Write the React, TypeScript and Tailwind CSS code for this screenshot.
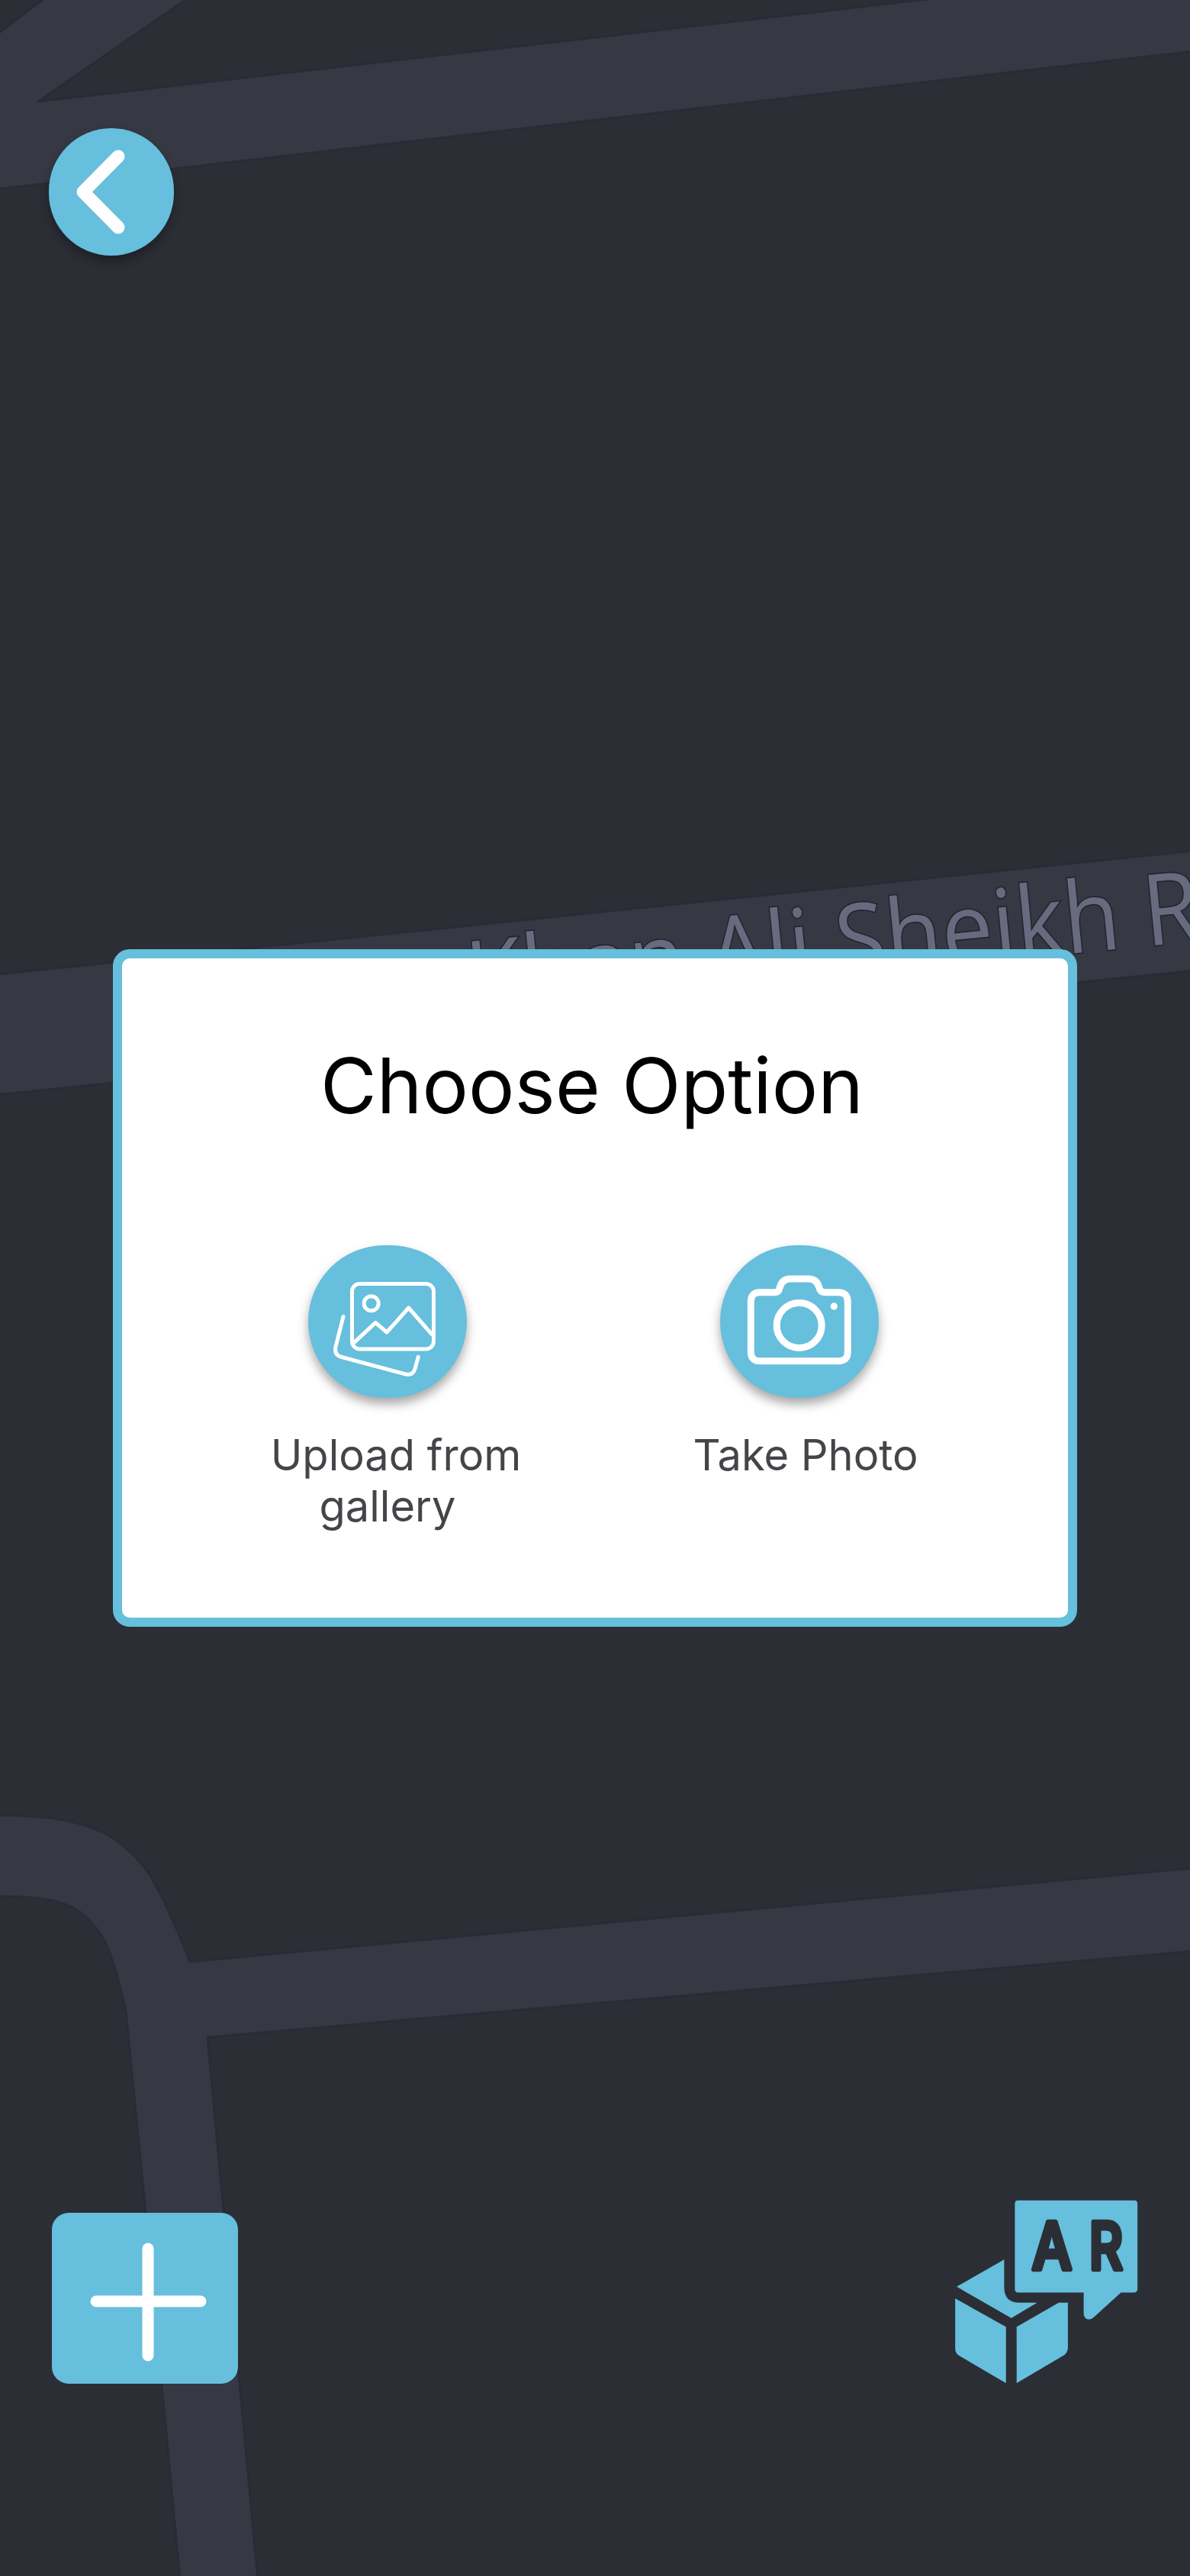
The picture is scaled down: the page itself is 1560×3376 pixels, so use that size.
import React from 'react';

const ACCENT = 'bg-[#66bfdc]';

function MapBackdrop() {
	return (
		<svg className="absolute inset-0" width="1560" height="3376" viewBox="0 0 1560 3376">
			<rect width="1560" height="3376" fill="#2c2e36" />
			<g fill="#363843" stroke="#292b35" strokeWidth="3">
				<path d="M62 -5H250L50 133L1250 -5H1565V67L-5 248V46Z" />
				<path d="M-5 1277L1565 1115V1272L-5 1435Z" />
				<path d="M-5 2379C60 2379 110 2385 150 2410C190 2440 205 2460 249 2571L1565 2448V2557L272 2670L338 3381H236L190 2890L165 2636C150 2570 140 2540 120 2520C100 2495 70 2485 -5 2485Z" />
			</g>
			<text
				transform="translate(616 1327) rotate(-5.6) scale(1 1.08)"
				fill="#686a80"
				stroke="#23242d"
				strokeWidth="3"
				paintOrder="stroke"
				fontSize="120"
				fontFamily="'Open Sans', sans-serif"
			>
				Khan Ali Sheikh R
			</text>
		</svg>
	);
}

function GalleryIcon() {
	return (
		<svg width="208" height="200" viewBox="0 0 208 200" fill="none" stroke="#fff" strokeWidth="5" strokeLinecap="round" strokeLinejoin="round">
			<rect x="57.5" y="50.5" width="107" height="85.5" rx="10" />
			<circle cx="82.7" cy="76.3" r="9.5" />
			<path d="M59 128.7L88.3 101.3L103 114L131.7 82L162 116.7" />
			<path d="M46 93.5L36 133Q34 143 42 146L128 169Q137 171 140 162L144.3 146.3" />
		</svg>
	);
}

function CameraIcon() {
	return (
		<svg width="208" height="200" viewBox="0 0 208 200" fill="none" stroke="#fff" strokeWidth="9" strokeLinejoin="round">
			<path d="M52 61.7H72Q77 61.7 78 56Q81 44 92 44H116Q127 44 130 56Q131.5 61.7 137 61.7H155Q167.3 61.7 167.3 74V140Q167.3 151.7 155 151.7H52Q40.3 151.7 40.3 140V74Q40.3 61.7 52 61.7Z" />
			<circle cx="103.7" cy="105" r="29.5" />
			<circle cx="149.3" cy="80" r="4.7" fill="#fff" stroke="none" />
		</svg>
	);
}

function ArLogo() {
	return (
		<svg width="240" height="241" viewBox="157 130 720 724" fill="#66bfdc">
			<path d="M405 132H862Q875 132 875 145V480Q875 495 860 495H810L700 595Q685 605 672 597Q663 590 663 575V495H405Q392 495 392 480V145Q392 132 405 132Z" />
			<path d="M350 365V475Q350 535 410 535H480L378 596L163 472Z" />
			<path d="M157 518L357 630V852L175 745Q157 735 157 715Z" />
			<path d="M399 630L565 535H601V710Q601 732 585 742L399 852Z" />
			<g fill="#2c2e36" stroke="#2c2e36" strokeWidth="20" strokeLinejoin="round" fontFamily="Inter, sans-serif" fontWeight="500" fontSize="256">
				<text transform="translate(538 403) scale(0.86 1)" textAnchor="middle">A</text>
				<text transform="translate(751 403) scale(0.8 1)" textAnchor="middle">R</text>
			</g>
		</svg>
	);
}

function OptionButton({icon, children}: {icon: React.ReactNode; children: React.ReactNode}) {
	return (
		<div className="flex flex-col items-center w-[400px]">
			<div className={`w-[208px] h-[200px] rounded-full ${ACCENT} shadow-[0_8px_14px_rgba(0,0,0,0.35)]`}>{icon}</div>
			<div className="mt-[42px] text-center text-[56px] leading-[67px] text-[#444549]">{children}</div>
		</div>
	);
}

export default function App() {
	return (
		<div className="relative w-[1560px] h-[3376px] overflow-hidden font-['Inter',sans-serif]">
			<MapBackdrop />
			<div className="relative flex flex-col h-full">
				<div className="pl-[64px] pt-[168px]">
					<button className={`flex items-center justify-center w-[164px] h-[167px] rounded-full ${ACCENT} shadow-[0_8px_14px_rgba(0,0,0,0.3)]`}>
						<svg width="164" height="167" viewBox="0 0 164 167" fill="none" stroke="#fff" strokeWidth="17" strokeLinecap="round" strokeLinejoin="round">
							<path d="M91 37L45 83.5L91 130" />
						</svg>
					</button>
				</div>

				<div className="ml-[148px] mt-[909px] w-[1264px] h-[888px] rounded-[22px] border-[12px] border-[#66bfdc] bg-white">
					<h1 className="mt-[108px] -ml-[8px] text-center text-[101px] leading-[116px] font-normal text-black">Choose Option</h1>
					<div className="flex mt-[152px] pl-[148px] gap-[140px]">
						<OptionButton icon={<GalleryIcon />}>
							<span className="pl-[22px]">Upload from</span>
							<br />
							gallery
						</OptionButton>
						<OptionButton icon={<CameraIcon />}>
							<span className="pl-[16px]">Take Photo</span>
						</OptionButton>
					</div>
				</div>

				<div className="flex items-end justify-between mt-[751px] pl-[68px] pr-[68px]">
					<button className={`flex items-center justify-center w-[244px] h-[224px] rounded-[22px] ${ACCENT}`}>
						<svg width="244" height="224" viewBox="0 0 244 224" fill="none" stroke="#fff" strokeWidth="15" strokeLinecap="round">
							<path d="M126 47V187M58 116H195" />
						</svg>
					</button>
					<ArLogo />
				</div>
			</div>
		</div>
	);
}
